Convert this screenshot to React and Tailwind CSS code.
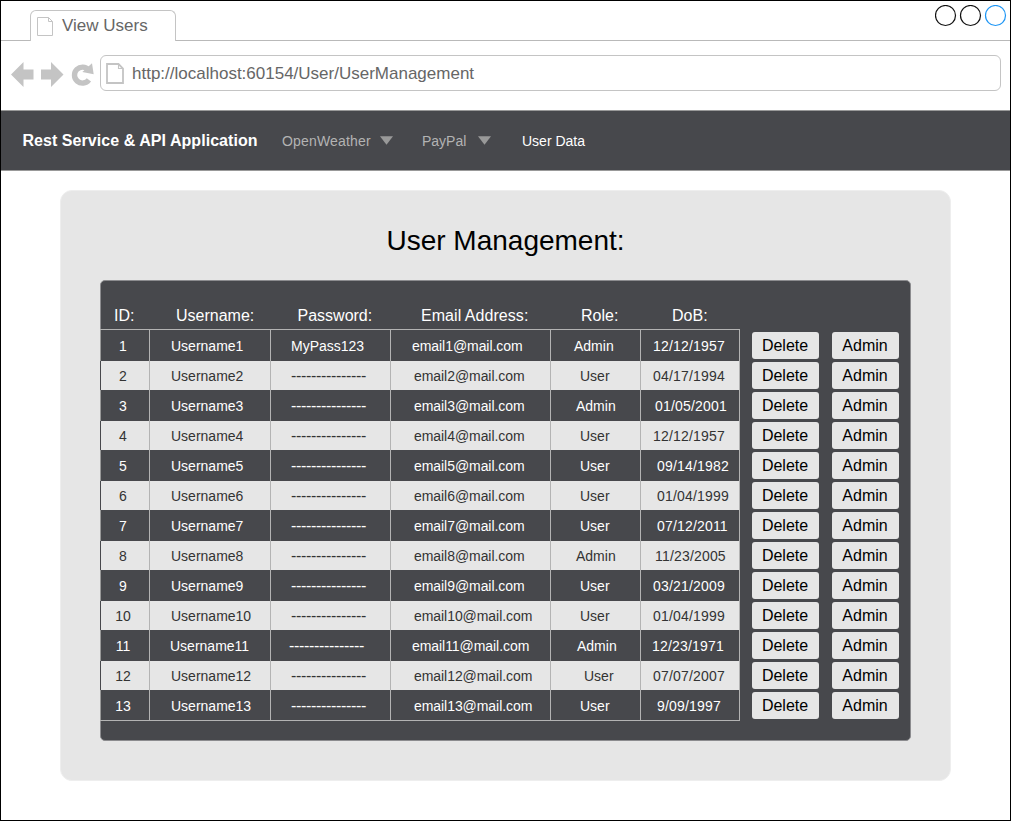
const DASHES = "-".repeat(15);

// Each text cell is [label, left inset in pixels]
const rows = [
  ["1", ["Username1", 21], ["MyPass123", 20], ["email1@mail.com", 21], ["Admin", 23], ["12/12/1957", 12]],
  ["2", ["Username2", 21], [DASHES, 20], ["email2@mail.com", 23], ["User", 29], ["04/17/1994", 12]],
  ["3", ["Username3", 21], [DASHES, 20], ["email3@mail.com", 23], ["Admin", 25], ["01/05/2001", 14]],
  ["4", ["Username4", 21], [DASHES, 20], ["email4@mail.com", 23], ["User", 29], ["12/12/1957", 12]],
  ["5", ["Username5", 21], [DASHES, 20], ["email5@mail.com", 23], ["User", 29], ["09/14/1982", 16]],
  ["6", ["Username6", 21], [DASHES, 20], ["email6@mail.com", 23], ["User", 29], ["01/04/1999", 16]],
  ["7", ["Username7", 21], [DASHES, 20], ["email7@mail.com", 23], ["User", 29], ["07/12/2011", 16]],
  ["8", ["Username8", 21], [DASHES, 20], ["email8@mail.com", 23], ["Admin", 25], ["11/23/2005", 14]],
  ["9", ["Username9", 21], [DASHES, 20], ["email9@mail.com", 23], ["User", 29], ["03/21/2009", 12]],
  ["10", ["Username10", 21], [DASHES, 20], ["email10@mail.com", 23], ["User", 29], ["01/04/1999", 12]],
  ["11", ["Username11", 20], [DASHES, 18], ["email11@mail.com", 21], ["Admin", 26], ["12/23/1971", 11]],
  ["12", ["Username12", 21], [DASHES, 20], ["email12@mail.com", 23], ["User", 33], ["07/07/2007", 12]],
  ["13", ["Username13", 21], [DASHES, 20], ["email13@mail.com", 23], ["User", 29], ["9/09/1997", 16]],
];

function PageIcon({ className, thick }) {
  return thick ? (
    <svg className={className} width="18" height="21" viewBox="0 0 18 21" fill="none" stroke="#c4c4c4">
      <path d="M1 1h11.500L17 5.500v14.500H1z" strokeWidth="1.8" />
      <path d="M12.500 1v4.500h4.500" strokeWidth="1.1" />
    </svg>
  ) : (
    <svg className={className} width="16" height="19" viewBox="0 0 16 19" fill="none" stroke="#c4c4c4">
      <path d="M.5 .5h11L15.500 4.500v14H.5z" />
      <path d="M11.500 .5v4h4" />
    </svg>
  );
}

function Caret({ className }) {
  return (
    <svg className={className} width="13" height="9" viewBox="0 0 13 9">
      <path d="M0 .2h13L6.500 8.700z" fill="#999999" />
    </svg>
  );
}

function BrowserChrome() {
  return (
    <>
      <div className="flex h-10 shrink-0 items-end justify-between border-b border-[#b9b9b9]">
        <div className="-mb-px ml-[29px] flex h-[31px] w-[146px] items-start rounded-t-[6px] border border-b-0 border-[#c4c4c4] bg-white">
          <PageIcon className="ml-[6px] mt-[6px]" />
          <span className="ml-[9px] mt-[5px] text-[17px] leading-[20px] text-[#666666]">View Users</span>
        </div>
        <svg className="mb-[13px] mr-[3px]" width="72" height="22" viewBox="0 0 72 22" fill="none" strokeWidth="1.2">
          <circle cx="10.500" cy="10.500" r="10" stroke="#111" />
          <circle cx="35.500" cy="10.500" r="10" stroke="#111" />
          <circle cx="60.500" cy="10.500" r="10" stroke="#1e96f5" />
        </svg>
      </div>
      <div className="flex h-[69px] shrink-0 items-start pt-[14px]">
        <svg className="mt-[6px] ml-[10px] shrink-0" width="84" height="26" viewBox="0 0 84 26" fill="#c4c4c4">
          <path d="M0 13.500 12.500 1v7.500H22.500v10H12.500V26z" />
          <path d="M52.500 13.500 40 1v7.500H30v10h10V26z" />
          <path
            d="M77.600 8.900A8 8 0 1 0 77.900 18.900"
            fill="none"
            stroke="#c4c4c4"
            strokeWidth="5.400"
          />
          <path d="M81 2.300 82.700 13.200 71.300 11z" />
        </svg>
        <div className="ml-[5px] mr-[9px] flex h-9 flex-1 items-start rounded-[6px] border border-[#c4c4c4]">
          <PageIcon thick className="ml-[5px] mt-[7px]" />
          <span className="ml-[8px] mt-[8px] text-[17px] leading-[20px] text-[#666666]">
            http://localhost:60154/User/UserManagement
          </span>
        </div>
      </div>
    </>
  );
}

function NavBar() {
  return (
    <nav className="flex h-[61px] shrink-0 items-center border-y border-[#999999] bg-[#47484c] text-[14px] leading-[20px] text-[#b3b3b3]">
      <span className="ml-[21.5px] w-[259.5px] text-[16px] font-bold tracking-[0.05px] text-white">
        Rest Service &amp; API Application
      </span>
      <span className="mt-px w-[98px] tracking-[0.18px]">OpenWeather</span>
      <Caret />
      <span className="ml-[29px] mt-px w-[56px]">PayPal</span>
      <Caret />
      <span className="ml-[31px] mt-px text-white">User Data</span>
    </nav>
  );
}

function trackingFor(label) {
  if (label === DASHES) return "text-[16px] tracking-[-0.33px]";
  if (label.includes("@")) return "tracking-[-0.06px]";
  if (label.includes("/")) return "tracking-[0.18px]";
  return "";
}

function Cell({ data }) {
  const [label, inset] = data;
  return (
    <div
      className={`overflow-hidden whitespace-nowrap border-r border-[#b3b3b3] pt-[6px] ${trackingFor(label)}`}
      style={{ paddingLeft: inset }}
    >
      {label}
    </div>
  );
}

function Row({ row, index }) {
  const [id, ...cells] = row;
  const light = index % 2 === 1;
  const last = index === rows.length - 1;
  return (
    <div
      className={`grid grid-cols-[50px_121px_120px_160px_90px_99px] border-l text-[14px] leading-[20px] ${
        light
          ? "h-[29px] border-[#47484c] bg-[#e6e6e6] text-[#333333]"
          : `${last ? "h-[30px]" : "h-[31px]"} border-[#999999] text-white`
      }`}
    >
      <div className={`mr-px border-r border-[#b3b3b3] pr-[4px] text-center ${light ? "pt-[5px]" : "pt-[6px]"}`}>{id}</div>
      {cells.map((cell, i) => (
        <div key={i} className={light ? "-ml-px -mt-px mr-px grid" : "-ml-px mr-px grid"}>
          <Cell data={cell} />
        </div>
      ))}
    </div>
  );
}

function ActionButton({ children }) {
  return (
    <button className="h-[27px] w-[67px] rounded-[3px] bg-[#e6e6e6] pr-px text-center text-[16px] leading-[26px] text-black">
      {children}
    </button>
  );
}

export default function App() {
  return (
    <div className="flex h-[821px] w-[1011px] flex-col overflow-hidden border border-black bg-white font-['Liberation_Sans',Arial,sans-serif]">
      <BrowserChrome />
      <NavBar />
      <main className="ml-[59px] mt-[19px] flex h-[591px] w-[891px] shrink-0 flex-col items-center rounded-[12px] border border-[#eeeeee] bg-[#e6e6e6]">
        <h1 className="mt-[34px] text-[28px] leading-[32px] text-black">User Management:</h1>
        <section className="mt-[23px] flex h-[461px] w-[811px] shrink-0 flex-col rounded-[5px] border border-[#8c8c8f] bg-[#47484c]">
          <div className="flex h-[48px] pt-[25px] text-[16px] leading-[20px] text-white">
            <span className="ml-[13px] w-[62px]">ID:</span>
            <span className="w-[121.5px]">Username:</span>
            <span className="w-[123.5px]">Password:</span>
            <span className="w-[160px] tracking-[0.05px]">Email Address:</span>
            <span className="w-[91px]">Role:</span>
            <span>DoB:</span>
          </div>
          <div className="-ml-px flex">
            <div className="w-[640px] border-y border-[#b3b3b3]">
              {rows.map((row, i) => (
                <Row key={row[0]} row={row} index={i} />
              ))}
            </div>
            <div className="ml-[12px] mt-[3px] grid grid-cols-[67px_67px] content-start gap-x-[13px] gap-y-[3px]">
              {rows.map((row) => [
                <ActionButton key={`delete-${row[0]}`}>Delete</ActionButton>,
                <ActionButton key={`admin-${row[0]}`}>Admin</ActionButton>,
              ])}
            </div>
          </div>
        </section>
      </main>
    </div>
  );
}
